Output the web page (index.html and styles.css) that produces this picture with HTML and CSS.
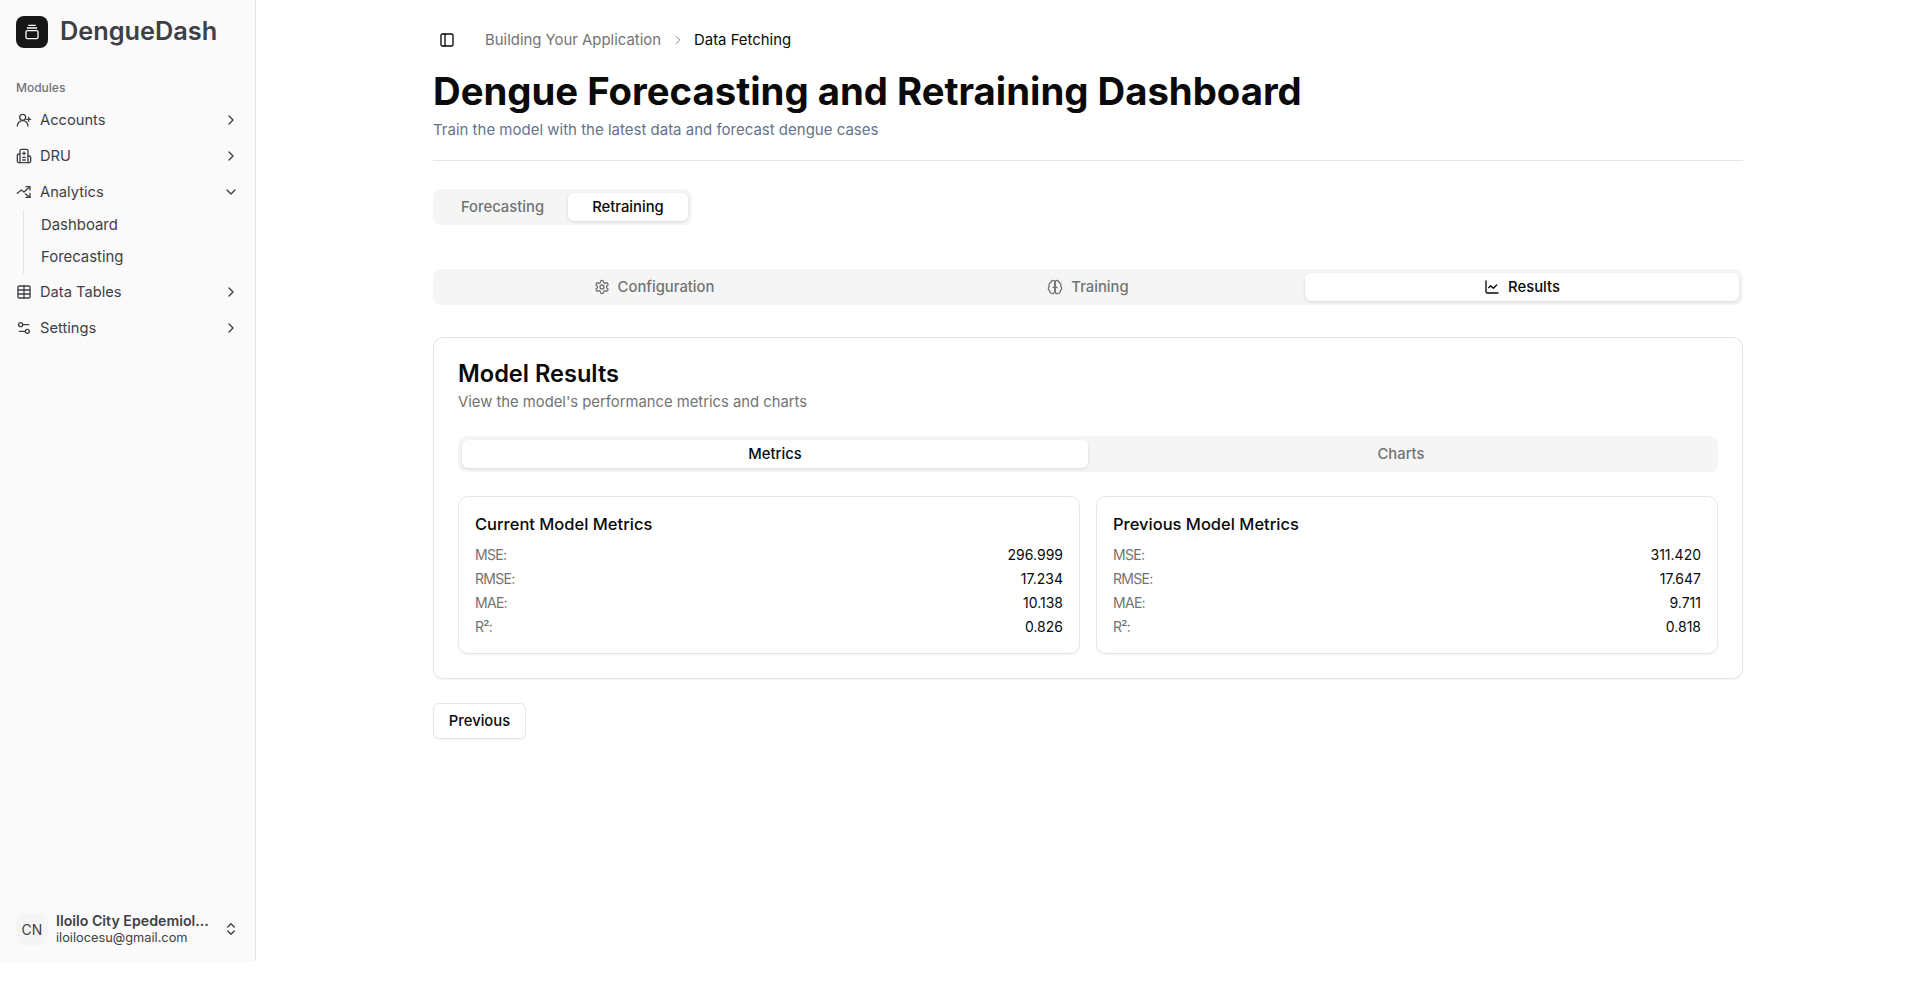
FILE: index.html
```html
<!DOCTYPE html>
<html lang="en">
<head>
    <meta charset="UTF-8">
    <title>DengueDash</title>
    <link rel="stylesheet" href="styles.css">
</head>
<body>
    <aside class="sidebar">
        <div class="brand">
            <span class="brand-logo">
                <svg class="icon" viewBox="0 0 24 24"><rect x="3" y="10" width="18" height="12" rx="2"/><path d="M5 6h14M7 2h10"/></svg>
            </span>
            <span class="brand-name">DengueDash</span>
        </div>
        <div class="group-label">Modules</div>
        <nav class="nav">
            <a class="nav-item">
                <svg class="icon" viewBox="0 0 24 24"><path d="M2 21a8 8 0 0 1 16 0"/><circle cx="10" cy="8" r="4.5"/><path d="M19 8v6M22 11h-6"/></svg>
                <span class="nav-text">Accounts</span>
                <svg class="chev" viewBox="0 0 24 24"><path d="m9 18 6-6-6-6"/></svg>
            </a>
            <a class="nav-item">
                <svg class="icon" viewBox="0 0 24 24"><path d="M12 6v4M14 14h-4M14 18h-4M14 8h-4"/><path d="M18 12h2a2 2 0 0 1 2 2v6a2 2 0 0 1-2 2H4a2 2 0 0 1-2-2v-9a2 2 0 0 1 2-2h2"/><path d="M18 22V4a2 2 0 0 0-2-2H8a2 2 0 0 0-2 2v18"/></svg>
                <span class="nav-text">DRU</span>
                <svg class="chev" viewBox="0 0 24 24"><path d="m9 18 6-6-6-6"/></svg>
            </a>
            <a class="nav-item">
                <svg class="icon" viewBox="0 0 24 24"><path d="M2 14l6-5 4 3 8-7"/><path d="M15 4h6v5"/><path d="M14 15l7 5"/><path d="M21 14v6h-6"/></svg>
                <span class="nav-text">Analytics</span>
                <svg class="chev" viewBox="0 0 24 24"><path d="m6 9 6 6 6-6"/></svg>
            </a>
            <div class="nav-sub">
                <a class="nav-subitem">Dashboard</a>
                <a class="nav-subitem">Forecasting</a>
            </div>
            <a class="nav-item">
                <svg class="icon" viewBox="0 0 24 24"><rect x="3" y="3" width="18" height="18" rx="2"/><path d="M12 3v18M3 9h18M3 15h18"/></svg>
                <span class="nav-text">Data Tables</span>
                <svg class="chev" viewBox="0 0 24 24"><path d="m9 18 6-6-6-6"/></svg>
            </a>
            <a class="nav-item">
                <svg class="icon" viewBox="0 0 24 24"><path d="M14 17H5M19 7h-9"/><circle cx="17" cy="17" r="3"/><circle cx="7" cy="7" r="3"/></svg>
                <span class="nav-text">Settings</span>
                <svg class="chev" viewBox="0 0 24 24"><path d="m9 18 6-6-6-6"/></svg>
            </a>
        </nav>
        <div class="user">
            <span class="avatar">CN</span>
            <div class="user-info">
                <div class="user-name">Iloilo City Epedemiol...</div>
                <div class="user-mail">iloilocesu@gmail.com</div>
            </div>
            <svg class="chev" viewBox="0 0 24 24"><path d="m7 15 5 5 5-5M7 9l5-5 5 5"/></svg>
        </div>
    </aside>

    <main class="main">
        <div class="crumbs">
            <svg class="icon crumb-toggle" viewBox="0 0 24 24"><rect x="3" y="3" width="18" height="18" rx="2"/><path d="M9 3v18"/></svg>
            <span class="crumb-link">Building Your Application</span>
            <svg class="crumb-sep" viewBox="0 0 24 24"><path d="m9 18 6-6-6-6"/></svg>
            <span class="crumb-current">Data Fetching</span>
        </div>

        <h1 class="page-title">Dengue Forecasting and Retraining Dashboard</h1>
        <p class="page-desc">Train the model with the latest data and forecast dengue cases</p>
        <hr class="rule">

        <div class="tabs tabs-small">
            <button class="tab tab-forecast">Forecasting</button>
            <button class="tab tab-retrain active">Retraining</button>
        </div>

        <div class="tabs tabs-wide">
            <button class="tab">
                <svg class="icon" viewBox="0 0 24 24"><path d="M12.22 2h-.44a2 2 0 0 0-2 2v.18a2 2 0 0 1-1 1.73l-.43.25a2 2 0 0 1-2 0l-.15-.08a2 2 0 0 0-2.73.73l-.22.38a2 2 0 0 0 .73 2.73l.15.1a2 2 0 0 1 1 1.72v.51a2 2 0 0 1-1 1.74l-.15.09a2 2 0 0 0-.73 2.73l.22.38a2 2 0 0 0 2.73.73l.15-.08a2 2 0 0 1 2 0l.43.25a2 2 0 0 1 1 1.73V20a2 2 0 0 0 2 2h.44a2 2 0 0 0 2-2v-.18a2 2 0 0 1 1-1.73l.43-.25a2 2 0 0 1 2 0l.15.08a2 2 0 0 0 2.73-.73l.22-.39a2 2 0 0 0-.73-2.73l-.15-.08a2 2 0 0 1-1-1.74v-.5a2 2 0 0 1 1-1.74l.15-.09a2 2 0 0 0 .73-2.73l-.22-.38a2 2 0 0 0-2.73-.73l-.15.08a2 2 0 0 1-2 0l-.43-.25a2 2 0 0 1-1-1.73V4a2 2 0 0 0-2-2z"/><circle cx="12" cy="12" r="3"/></svg>
                Configuration
            </button>
            <button class="tab">
                <svg class="icon" viewBox="0 0 24 24"><path d="M12 5a3 3 0 1 0-5.997.125 4 4 0 0 0-2.526 5.77 4 4 0 0 0 .556 6.588A4 4 0 1 0 12 18Z"/><path d="M12 5a3 3 0 1 1 5.997.125 4 4 0 0 1 2.526 5.77 4 4 0 0 1-.556 6.588A4 4 0 1 1 12 18Z"/><path d="M15 13a4.5 4.5 0 0 1-3-4 4.5 4.5 0 0 1-3 4"/><path d="M12 5v13"/></svg>
                Training
            </button>
            <button class="tab active">
                <svg class="icon" viewBox="0 0 24 24"><path d="M3 3v16a2 2 0 0 0 2 2h16"/><path d="m19 9-5 5-4-4-3 3"/></svg>
                Results
            </button>
        </div>

        <section class="card">
            <h2 class="card-title">Model Results</h2>
            <p class="card-desc">View the model's performance metrics and charts</p>

            <div class="tabs tabs-inner">
                <button class="tab active">Metrics</button>
                <button class="tab">Charts</button>
            </div>

            <div class="metric-grid">
                <div class="metric-card">
                    <h3 class="metric-title">Current Model Metrics</h3>
                    <div class="metric-row"><span>MSE:</span><b>296.999</b></div>
                    <div class="metric-row"><span>RMSE:</span><b>17.234</b></div>
                    <div class="metric-row"><span>MAE:</span><b>10.138</b></div>
                    <div class="metric-row"><span>R²:</span><b>0.826</b></div>
                </div>
                <div class="metric-card">
                    <h3 class="metric-title">Previous Model Metrics</h3>
                    <div class="metric-row"><span>MSE:</span><b>311.420</b></div>
                    <div class="metric-row"><span>RMSE:</span><b>17.647</b></div>
                    <div class="metric-row"><span>MAE:</span><b>9.711</b></div>
                    <div class="metric-row"><span>R²:</span><b>0.818</b></div>
                </div>
            </div>
        </section>

        <button class="btn-prev">Previous</button>
    </main>
</body>
</html>
```

FILE: styles.css
```css
* {
    box-sizing: border-box;
}
body {
    margin: 0;
    height: 989px;
    display: flex;
    align-items: flex-start;
    overflow: hidden;
    background: #fff;
    color: #0a0a0a;
    font-family: Inter, "Noto Sans", sans-serif;
}
h1, h2, h3, p {
    margin: 0;
}
svg {
    fill: none;
    stroke: currentColor;
    stroke-width: 2;
    stroke-linecap: round;
    stroke-linejoin: round;
    flex: none;
}
.icon {
    width: 16px;
    height: 16px;
}
.chev {
    width: 16px;
    height: 16px;
    margin-left: auto;
}

/* sidebar */
.sidebar {
    width: 256px;
    height: 961px;
    flex: none;
    display: flex;
    flex-direction: column;
    background: #fafafa;
    border-right: 1px solid #e5e5e5;
    color: #3f3f46;
}
.brand {
    display: flex;
    align-items: center;
    gap: 12px;
    padding: 16px 16px 0;
}
.brand-logo {
    width: 32px;
    height: 32px;
    border-radius: 8px;
    background: #171717;
    color: #fafafa;
    display: flex;
    align-items: center;
    justify-content: center;
}
.brand-name {
    height: 32px;
    line-height: 30px;
    font-size: 25.3px;
    font-weight: 600;
}
.group-label {
    margin-top: 32px;
    padding-left: 16px;
    height: 16px;
    line-height: 16px;
    font-size: 12px;
    font-weight: 500;
    color: #71717a;
}
.nav {
    margin-top: 6px;
    padding: 0 16px;
}
.nav-item {
    display: flex;
    align-items: center;
    gap: 8px;
    height: 36px;
    font-size: 14.7px;
}
.nav-sub {
    margin-left: 7px;
    padding-left: 17px;
    border-left: 1px solid #e5e5e5;
}
.nav-subitem {
    display: block;
    height: 32px;
    line-height: 30px;
    font-size: 14.9px;
}
.user {
    margin-top: auto;
    height: 32px;
    margin-bottom: 16px;
    padding: 0 16px;
    display: flex;
    align-items: center;
    gap: 8px;
}
.avatar {
    width: 32px;
    height: 32px;
    flex: none;
    border-radius: 8px;
    background: #f5f5f5;
    display: flex;
    align-items: center;
    justify-content: center;
    font-size: 14px;
}
.user-info {
    line-height: 16px;
    white-space: nowrap;
}
.user-name {
    font-size: 14.2px;
    font-weight: 600;
}
.user-mail {
    margin-top: 1px;
    font-size: 12.8px;
}

/* main */
.main {
    flex: 1;
    padding: 0 177px;
}
.crumbs {
    height: 80px;
    padding: 32px 4px 0 6px;
    display: flex;
    align-items: flex-start;
    font-size: 14.9px;
    line-height: 16px;
}
.crumb-toggle {
    margin-right: 30px;
}
.crumb-link {
    color: #737373;
}
.crumb-sep {
    width: 14px;
    height: 14px;
    margin: 1px 9px 0 10px;
    color: #737373;
    stroke-width: 1.5;
}
.page-title {
    margin-top: -9px;
    height: 40px;
    font-size: 38.3px;
    line-height: 40px;
    font-weight: 700;
    white-space: nowrap;
}
.page-desc {
    margin-top: 9px;
    font-size: 15px;
    line-height: 20px;
    color: #64748b;
}
.rule {
    margin: 20px 0 28px;
    border: 0;
    border-top: 1px solid #e5e5e5;
}
.tabs {
    display: flex;
    height: 36px;
    padding: 4px;
    border-radius: 8px;
    background: #f5f5f5;
}
.tab {
    flex: 1;
    display: flex;
    align-items: center;
    justify-content: center;
    gap: 8px;
    padding: 0 0 1px;
    border: 0;
    border-radius: 6px;
    background: none;
    font: inherit;
    font-size: 14.8px;
    font-weight: 500;
    color: #737373;
}
.tab.active {
    background: #fff;
    color: #0a0a0a;
    box-shadow: 0 1px 3px rgba(0, 0, 0, 0.12);
}
.tabs-small {
    width: 259px;
}
.tab-forecast {
    flex: none;
    width: 131px;
}
.tab-retrain {
    flex: none;
    width: 120px;
}
.tabs-wide {
    margin-top: 44px;
}
.card {
    margin-top: 32px;
    height: 342px;
    padding: 24px;
    border: 1px solid #e5e5e5;
    border-radius: 10px;
    box-shadow: 0 1px 2px rgba(0, 0, 0, 0.05);
}
.card-title {
    font-size: 23.6px;
    line-height: 24px;
    font-weight: 600;
}
.card-desc {
    margin-top: 6px;
    font-size: 14.8px;
    line-height: 20px;
    color: #737373;
}
.tabs-inner {
    margin-top: 24px;
}
.metric-grid {
    margin-top: 24px;
    display: grid;
    grid-template-columns: 1fr 1fr;
    gap: 16px;
}
.metric-card {
    height: 158px;
    padding: 15px 16px;
    border: 1px solid #e5e5e5;
    border-radius: 10px;
    box-shadow: 0 1px 2px rgba(0, 0, 0, 0.05);
}
.metric-title {
    font-size: 16.5px;
    line-height: 24px;
    font-weight: 500;
    margin-bottom: 7px;
}
.metric-row {
    display: flex;
    justify-content: space-between;
    height: 24px;
    line-height: 24px;
    font-size: 14px;
}
.metric-row span {
    color: #737373;
    letter-spacing: -0.7px;
}
.metric-row b {
    font-weight: 400;
}
.btn-prev {
    margin-top: 24px;
    width: 93px;
    height: 36px;
    border: 1px solid #e5e5e5;
    border-radius: 6px;
    background: #fff;
    font: inherit;
    font-size: 14.8px;
    font-weight: 500;
    color: #0a0a0a;
    box-shadow: 0 1px 2px rgba(0, 0, 0, 0.05);
}
```
